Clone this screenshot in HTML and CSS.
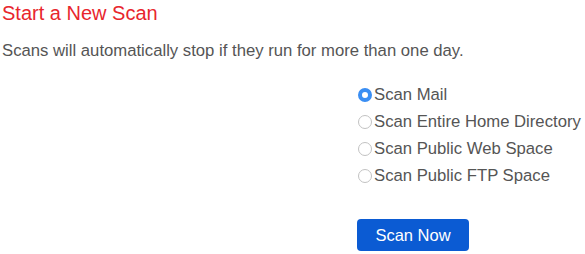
FILE: index.html
```html
<!DOCTYPE html>
<html lang="en">
<head>
  <meta charset="UTF-8">
  <title>Start a New Scan</title>
  <link rel="stylesheet" href="styles.css">
</head>
<body>
  <div class="scan-page">
    <h1 class="scan-title">Start a New Scan</h1>
    <p class="scan-note">Scans will automatically stop if they run for more than one day.</p>

    <form class="scan-form">
      <div class="scan-options">
        <label class="scan-option">
          <input type="radio" name="scanType" value="mail" checked>
          <span class="radio-dot"></span>Scan Mail
        </label>
        <label class="scan-option">
          <input type="radio" name="scanType" value="home">
          <span class="radio-dot"></span>Scan Entire Home Directory
        </label>
        <label class="scan-option">
          <input type="radio" name="scanType" value="web">
          <span class="radio-dot"></span>Scan Public Web Space
        </label>
        <label class="scan-option">
          <input type="radio" name="scanType" value="ftp">
          <span class="radio-dot"></span>Scan Public FTP Space
        </label>
      </div>
      <button type="button" class="scan-button">Scan Now</button>
    </form>
  </div>
</body>
</html>
```

FILE: styles.css
```css
* {
  margin: 0;
  padding: 0;
  box-sizing: border-box;
}

body {
  font-family: "Liberation Sans", Arial, sans-serif;
  background-color: #fff;
  color: #555;
}

.scan-page {
  padding: 0 2px;
}

.scan-title {
  font-size: 20px;
  font-weight: normal;
  line-height: 26px;
  color: #e8262d;
}

.scan-note {
  font-size: 16.7px;
  line-height: 20px;
  margin-top: 15px;
  color: #555;
}

.scan-form {
  margin-left: 355px;
  margin-top: 20px;
}

.scan-options {
  display: flex;
  flex-direction: column;
}

.scan-option {
  display: flex;
  align-items: center;
  height: 27px;
  font-size: 16.7px;
  color: #555;
  cursor: pointer;
}

.scan-option input {
  display: none;
}

.radio-dot {
  width: 14px;
  height: 14px;
  margin: 1px 2px 0 1px;
  border: 1px solid #c2c2c2;
  border-radius: 50%;
  background-color: #fff;
}

.scan-option input:checked + .radio-dot {
  border: 4.5px solid #3a8ef3;
  background-color: #fff;
}

.scan-button {
  display: block;
  width: 112px;
  height: 32px;
  margin-top: 30px;
  font-family: "Liberation Sans", Arial, sans-serif;
  font-size: 16.5px;
  color: #fff;
  background-color: #0b5bd3;
  border: none;
  border-radius: 4px;
  cursor: pointer;
}
```
